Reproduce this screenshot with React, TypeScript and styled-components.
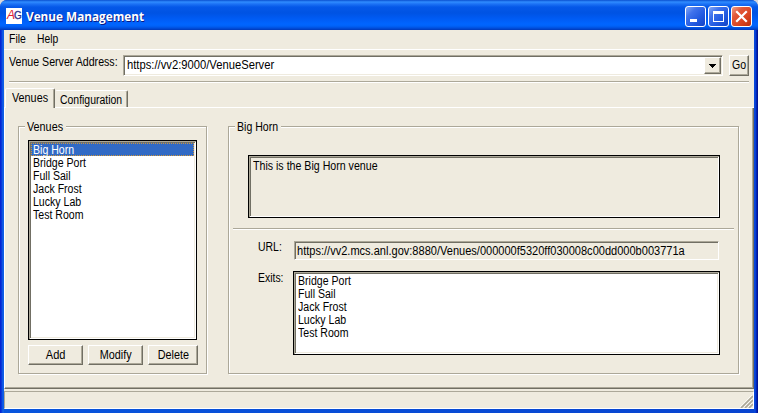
import React from "react";
import styled, { createGlobalStyle } from "styled-components";

const face = "#efebdf";
const shadow = "#aca899";
const dark = "#716f64";

const GlobalStyle = createGlobalStyle`
  *, *::before, *::after { box-sizing: border-box; }
  body { margin: 0; background: #d8d8dc; overflow: hidden; }
  button { font: inherit; color: inherit; }
`;

const Frame = styled.div`
  width: 758px;
  height: 413px;
  display: flex;
  flex-direction: column;
  border-radius: 7px 7px 0 0;
  overflow: hidden;
  font: 12px/13px "Liberation Sans", Arial, sans-serif;
  color: #000;
  background: #0842d0;
`;

const TitleBar = styled.header`
  flex: 0 0 30px;
  display: flex;
  align-items: flex-start;
  padding: 6px 6px 0;
  background: linear-gradient(
    #0a50d0 0, #2f8cff 2px, #1c72f5 4px, #0558e8 7px, #0053e3 13px,
    #005af2 18px, #0065ff 24px, #0062f8 26px, #0050df 28px, #0038b8 30px
  );
`;

const AppIcon = styled.div`
  width: 16px;
  height: 16px;
  margin: 2px 4px 0 0;
  display: flex;
  justify-content: center;
  background: #fff;
  font: 12px/15px "Liberation Sans", Arial, sans-serif;
  color: #31318c;
  letter-spacing: -1px;
`;

const RedLetter = styled.span`
  color: #e02030;
  font-style: italic;
`;

const BlueLetter = styled.span`
  font-size: 10px;
  -webkit-text-stroke: 0.3px #31318c;
`;

const Title = styled.h1`
  margin: 2px 0 0;
  flex: 1;
  font: bold 13px/17px "Open Sans", sans-serif;
  color: #fff;
  text-shadow: 1px 1px 0 #0a1883;
  white-space: nowrap;
  transform: scaleX(0.905);
  transform-origin: left;
`;

const CaptionButtons = styled.div`
  display: flex;
  gap: 2px;
`;

const CaptionButton = styled.button<{ $danger?: boolean }>`
  width: 21px;
  height: 21px;
  padding: 0;
  border: 1px solid #fff;
  border-radius: 3px;
  background: ${(p) =>
    p.$danger
      ? "linear-gradient(135deg, #f0a088 0, #e2593a 30%, #da4420 65%, #b83010 100%)"
      : "linear-gradient(135deg, #84a8f5 0, #3f72ec 30%, #2159e0 65%, #1443c4 100%)"};
  svg { display: block; }
`;

const Body = styled.main`
  flex: 1;
  display: flex;
  flex-direction: column;
  min-height: 0;
  background: ${face};
  border: solid #0842d0;
  border-width: 0 4px 4px;
  border-image: linear-gradient(90deg, #0019cf 0, #0831d9 1px, #0842d9 2px, #1669ee 3px, #0855dd 4px,
    #0844d0 754px, #0b4ce0 755px, #0032c8 756px, #0018a8 757px, #001080 758px) 0 4 4 4;
`;

const Text = styled.span<{ $k?: number; $center?: boolean }>`
  display: inline-block;
  white-space: pre;
  transform: scaleX(${(p) => p.$k ?? 0.88});
  transform-origin: ${(p) => (p.$center ? "center" : "left")};
`;

const MenuBar = styled.nav`
  flex: 0 0 20px;
  display: grid;
  grid-template-columns: 28px auto;
  align-items: start;
  padding: 3px 5px 0;
  border-bottom: 1px solid #fff;
`;

const AddressBar = styled.section`
  flex: 0 0 33px;
  margin: 0 5px 0 5px;
  display: grid;
  grid-template-columns: 114px 600px 20px;
  column-gap: 0;
  align-items: start;
  padding-top: 5px;
  border-bottom: 1px solid #fff;
  box-shadow: inset 0 -1px 0 ${shadow};
`;

const AddressLabel = styled.label`
  padding-top: 1px;
`;

const ComboBox = styled.div`
  height: 21px;
  display: flex;
  justify-content: space-between;
  padding: 1px;
  background: #fff;
  border: 1px solid;
  border-color: ${shadow} #fff #fff ${shadow};
  box-shadow: inset 1px 1px 0 ${dark}, inset -1px -1px 0 ${face};
`;

const ComboText = styled.div`
  padding: 2px 0 0 2px;
`;

const raised = `
  background: ${face};
  border: 1px solid;
  border-color: #fff ${dark} ${dark} #fff;
  box-shadow: inset -1px -1px 0 ${shadow};
`;

const DropButton = styled.button`
  width: 17px;
  height: 17px;
  padding: 0;
  ${raised}
  svg { display: block; }
`;

const GoButton = styled.button`
  ${raised}
  width: 20px;
  height: 21px;
  margin-left: 6px;
  padding: 0 0 0 2px;
  text-align: left;
`;

const TabStrip = styled.div`
  flex: 0 0 25px;
  display: flex;
  align-items: flex-end;
  padding-left: 1px;
  box-shadow: inset 0 -1px 0 #fff;
`;

const Tab = styled.div<{ $active?: boolean }>`
  width: ${(p) => (p.$active ? 50 : 73)}px;
  height: ${(p) => (p.$active ? 20 : 17)}px;
  margin-bottom: ${(p) => (p.$active ? 0 : 1)}px;
  padding: ${(p) => (p.$active ? "3px 0 0 6px" : "3px 0 0 4px")};
  border: solid;
  border-width: 1px 1px 0;
  border-color: #fff ${dark} transparent ${(p) => (p.$active ? "#fff" : face)};
  border-radius: 2px 2px 0 0;
  background: ${face};
  box-shadow: inset -1px 0 0 ${shadow};
`;

const Page = styled.section`
  flex: 0 0 281px;
  display: grid;
  grid-template-columns: 189px 511px;
  column-gap: 21px;
  padding: 18px 0 14px 13px;
  border: solid;
  border-width: 0 1px 1px;
  border-color: transparent ${dark} ${dark} #fff;
  box-shadow: inset -1px -1px 0 ${shadow};
`;

const Group = styled.section`
  position: relative;
  height: 248px;
  border: 1px solid ${shadow};
  box-shadow: 1px 1px 0 #fff, inset 1px 1px 0 #fff;
`;

const Legend = styled.div<{ $w: number }>`
  position: absolute;
  left: 6px;
  top: -6px;
  width: ${(p) => p.$w}px;
  padding-left: 2px;
  background: ${face};
`;

const Sunken = styled.div<{ $h: number; $plain?: boolean }>`
  height: ${(p) => p.$h}px;
  padding: ${(p) => (p.$plain ? 3 : 2)}px 2px 2px;
  background: ${(p) => (p.$plain ? face : "#fff")};
  border: 1px solid #000;
  box-shadow: inset 1px 1px 0 ${shadow}, inset -1px -1px 0 #fff,
    inset 2px 2px 0 ${dark}, inset -2px -2px 0 ${face};
`;

const Item = styled.div<{ $selected?: boolean }>`
  height: 13px;
  padding: 1px 0 0 2px;
  ${(p) =>
    p.$selected &&
    `color: #fff; background: #316ac5; outline: 1px dotted #ce953a; outline-offset: -1px; overflow: hidden;`}
`;

const VenuePane = styled.div`
  padding: 13px 9px 0;
`;

const ButtonRow = styled.div`
  display: grid;
  grid-template-columns: 55px 55px 50px;
  gap: 5px;
  padding-top: 5px;
`;

const PushButton = styled.button`
  ${raised}
  height: 20px;
  padding: 1px 0 0;
  text-align: center;
  white-space: nowrap;
`;

const DetailPane = styled.div`
  padding: 28px 4px 0;
`;

const Indent = styled.div`
  padding: 0 14px 0 15px;
`;

const Rule = styled.div`
  height: 2px;
  margin: 10px 0 11px;
  border-top: 1px solid ${shadow};
  border-bottom: 1px solid #fff;
`;

const FieldRow = styled.div`
  display: grid;
  grid-template-columns: 35px 427px;
  padding-left: 25px;
`;

const UrlBox = styled.div`
  height: 19px;
  width: 425px;
  margin-left: 1px;
  padding: 3px 0 0 2px;
  border: 1px solid;
  border-color: ${shadow} #fff #fff ${shadow};
  box-shadow: inset 1px 1px 0 ${dark};
`;

const ExitsRow = styled(FieldRow)`
  padding-top: 11px;
`;

const ExitsLabel = styled.div`
  padding-top: 1px;
`;

const StatusBar = styled.footer`
  flex: 1;
  margin-top: 2px;
  display: flex;
  justify-content: flex-end;
  align-items: flex-end;
  border: 1px solid;
  border-color: ${shadow} #fff #fff ${shadow};
`;

const venues = ["Big Horn", "Bridge Port", "Full Sail", "Jack Frost", "Lucky Lab", "Test Room"];

export default function App() {
  return (
    <>
      <GlobalStyle />
      <Frame>
        <TitleBar>
          <AppIcon><RedLetter>A</RedLetter><BlueLetter>G</BlueLetter></AppIcon>
          <Title>Venue Management</Title>
          <CaptionButtons>
            <CaptionButton aria-label="Minimize">
              <svg width="19" height="19"><path d="M4 12h7v3H4z" fill="#fff" /></svg>
            </CaptionButton>
            <CaptionButton aria-label="Maximize">
              <svg width="19" height="19"><path d="M4 4h11v11H4zM5 7v7h9V7z" fill="#fff" fillRule="evenodd" /></svg>
            </CaptionButton>
            <CaptionButton $danger aria-label="Close">
              <svg width="19" height="19"><path d="M5 5l9 9M14 5l-9 9" stroke="#fff" strokeWidth="2.2" strokeLinecap="square" /></svg>
            </CaptionButton>
          </CaptionButtons>
        </TitleBar>
        <Body>
          <MenuBar>
            <Text $k={0.87}>File</Text>
            <Text $k={0.86}>Help</Text>
          </MenuBar>
          <AddressBar>
            <AddressLabel><Text $k={0.885}>Venue Server Address:</Text></AddressLabel>
            <ComboBox>
              <ComboText><Text $k={0.935}>https://vv2:9000/VenueServer</Text></ComboText>
              <DropButton aria-label="Show addresses">
                <svg width="15" height="15"><path d="M4 6h7v1h-1v1H9v1H8v1H7V9H6V8H5V7H4z" /></svg>
              </DropButton>
            </ComboBox>
            <GoButton><Text>Go</Text></GoButton>
          </AddressBar>
          <TabStrip>
            <Tab $active><Text $k={0.9}>Venues</Text></Tab>
            <Tab><Text $k={0.87}>Configuration</Text></Tab>
          </TabStrip>
          <Page>
            <Group>
              <Legend $w={41}><Text $k={0.9}>Venues</Text></Legend>
              <VenuePane>
                <Sunken $h={200}>
                  {venues.map((v, i) => (
                    <Item key={v} $selected={i === 0}><Text>{v}</Text></Item>
                  ))}
                </Sunken>
                <ButtonRow>
                  <PushButton><Text $center $k={0.92}>Add</Text></PushButton>
                  <PushButton><Text $center $k={0.9}>Modify</Text></PushButton>
                  <PushButton><Text $center $k={0.9}>Delete</Text></PushButton>
                </ButtonRow>
              </VenuePane>
            </Group>
            <Group>
              <Legend $w={46}><Text>Big Horn</Text></Legend>
              <DetailPane>
                <Indent>
                  <Sunken $h={63} $plain>
                    <Item><Text $k={0.885}>This is the Big Horn venue</Text></Item>
                  </Sunken>
                </Indent>
                <Rule />
                <FieldRow>
                  <Text $k={0.87}>URL:</Text>
                  <UrlBox>
                    <Text $k={0.92}>https://vv2.mcs.anl.gov:8880/Venues/000000f5320ff030008c00dd000b003771a</Text>
                  </UrlBox>
                </FieldRow>
                <ExitsRow>
                  <ExitsLabel><Text $k={0.87}>Exits:</Text></ExitsLabel>
                  <Sunken $h={84}>
                    {venues.slice(1).map((v) => (
                      <Item key={v}><Text>{v}</Text></Item>
                    ))}
                  </Sunken>
                </ExitsRow>
              </DetailPane>
            </Group>
          </Page>
          <StatusBar>
            <svg width="13" height="13">
              <path d="M1 13L13 1M5 13l8-8M9 13l4-4" stroke={shadow} strokeWidth="1.7" />
              <path d="M0 12L12 0M4 12l8-8M8 12l4-4" stroke="#fff" strokeWidth=".7" />
            </svg>
          </StatusBar>
        </Body>
      </Frame>
    </>
  );
}
